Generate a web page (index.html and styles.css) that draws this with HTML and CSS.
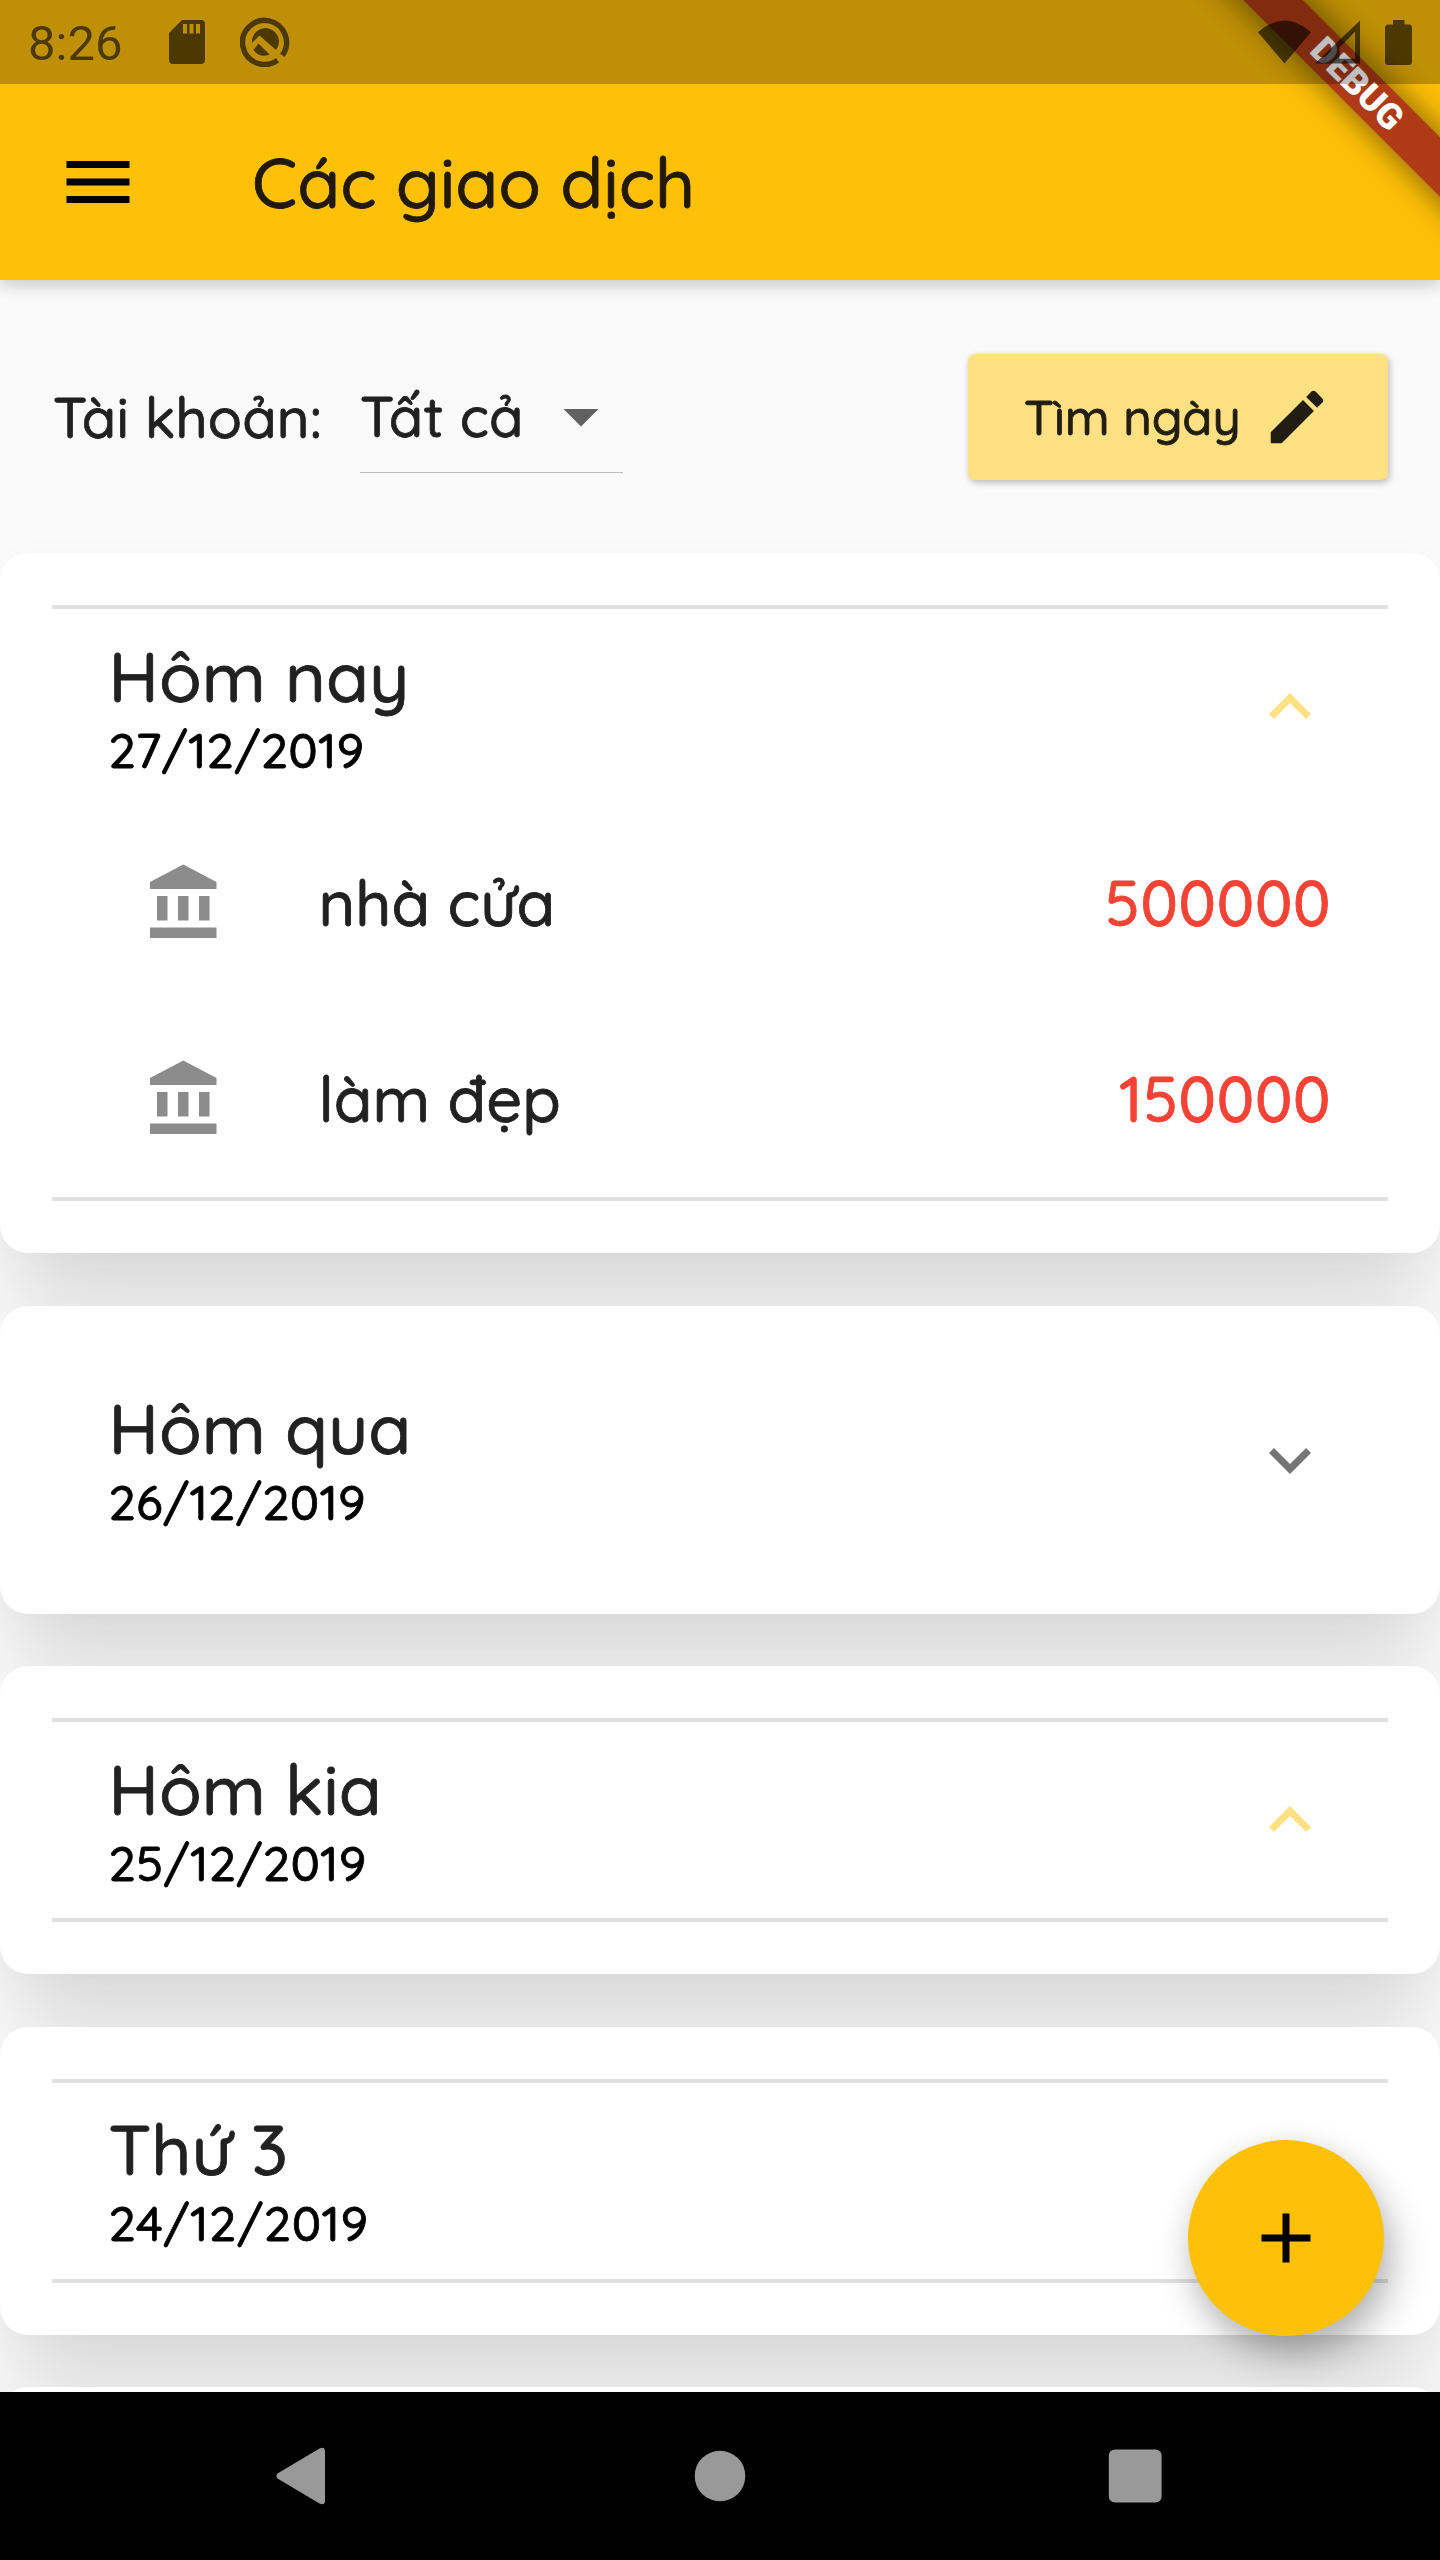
FILE: index.html
```html
<!DOCTYPE html>
<html lang="vi">
<head>
<meta charset="utf-8">
<title>Các giao dịch</title>
<link rel="stylesheet" href="styles.css">
</head>
<body>
<svg class="defs" width="0" height="0">
  <symbol id="bank" viewBox="0 0 24 24"><path d="M4 10v7h3v-7H4zm6 0v7h3v-7h-3zM2 22h19v-3H2v3zm14-12v7h3v-7h-3zm-4.500-9L2 6v2h19V6l-9.500-5z"/></symbol>
  <symbol id="less" viewBox="0 0 24 24"><path d="M12 8l-6 6 1.410 1.410L12 10.830l4.590 4.580L18 14z"/></symbol>
  <symbol id="more" viewBox="0 0 24 24"><path d="M16.590 8.590L12 13.170 7.410 8.590 6 10l6 6 6-6z"/></symbol>
</svg>
<div class="screen">
  <header class="appbar">
    <svg class="icon menu" viewBox="0 0 24 24"><path d="M3 18h18v-2H3v2zm0-5h18v-2H3v2zm0-7v2h18V6H3z"/></svg>
    <h1 class="appbar-title">Các giao dịch</h1>
  </header>

  <main class="content">
    <section class="filters">
      <span class="filter-label">Tài khoản:</span>
      <div class="select">
        <span class="select-value">Tất cả</span>
        <svg class="icon select-arrow" viewBox="0 0 24 24"><path d="M7 10l5 5 5-5z"/></svg>
      </div>
      <button class="date-button">
        <span class="date-button-text">Tìm ngày</span>
        <svg class="pencil" viewBox="0 0 24 24"><path d="M3 17.25V21h3.75L17.81 9.94l-3.75-3.75L3 17.25zM20.71 7.04c.39-.39.39-1.02 0-1.41l-2.34-2.34c-.39-.39-1.02-.39-1.41 0l-1.83 1.83 3.75 3.75 1.83-1.83z"/></svg>
      </button>
    </section>

    <section class="days">
      <article class="card">
        <div class="tile open">
          <div class="tile-head">
            <div class="tile-text"><h2 class="day">Hôm nay</h2><p class="date">27/12/2019</p></div>
            <svg class="icon chevron"><use href="#less"/></svg>
          </div>
          <div class="entry"><svg class="icon bank"><use href="#bank"/></svg><span class="entry-name">nhà cửa</span><span class="amount">500000</span></div>
          <div class="entry"><svg class="icon bank"><use href="#bank"/></svg><span class="entry-name">làm đẹp</span><span class="amount">150000</span></div>
        </div>
      </article>
      <article class="card">
        <div class="tile">
          <div class="tile-head">
            <div class="tile-text"><h2 class="day">Hôm qua</h2><p class="date">26/12/2019</p></div>
            <svg class="icon chevron"><use href="#more"/></svg>
          </div>
        </div>
      </article>
      <article class="card">
        <div class="tile open">
          <div class="tile-head">
            <div class="tile-text"><h2 class="day">Hôm kia</h2><p class="date">25/12/2019</p></div>
            <svg class="icon chevron"><use href="#less"/></svg>
          </div>
        </div>
      </article>
      <article class="card">
        <div class="tile open">
          <div class="tile-head">
            <div class="tile-text"><h2 class="day">Thứ 3</h2><p class="date date-loose">24/12/2019</p></div>
            <svg class="icon chevron"><use href="#less"/></svg>
          </div>
        </div>
      </article>
      <article class="card"></article>
    </section>
  </main>

  <nav class="navbar">
    <svg class="nav-icon" viewBox="0 0 84 84"><path d="M16.500 39.500 L58.500 14.500 Q64 12 64 17.500 V66.500 Q64 72 58.500 69.500 L16.500 44.500 Q14.500 42 16.500 39.500Z"/></svg>
    <svg class="nav-icon" viewBox="0 0 84 84"><circle cx="42" cy="42" r="25.300"/></svg>
    <svg class="nav-icon" viewBox="0 0 84 84"><rect x="13.800" y="15.500" width="52.800" height="53" rx="6"/></svg>
  </nav>

  <button class="fab"><svg class="icon" viewBox="0 0 24 24"><path d="M19 13h-6v6h-2v-6H5v-2h6V5h2v6h6v2z"/></svg></button>
  <div class="banner-clip"><div class="banner">DEBUG</div></div>

  <div class="statusbar">
    <span class="clock">8:26</span>
    <svg class="sd" viewBox="0 0 36 44"><path fill-rule="evenodd" d="M13 0H32Q36 0 36 4V40Q36 44 32 44H4Q0 44 0 40V13ZM14 4V13.500H18V4ZM20.500 4V13.500H24.500V4ZM27 4V13.500H31V4Z"/></svg>
    <svg class="qicon" viewBox="0 0 50 50"><path d="M37.500 43.200A22 22 0 1 1 42.300 38.400" fill="none" stroke="currentColor" stroke-width="5.500"/><path d="M12 26A13.500 13.500 0 1 1 36 33L19.500 18.500Z"/><path d="M13.500 33L18.500 26.500L29.500 37.500Q20 41.500 13.500 33Z"/></svg>
    <span class="spacer"></span>
    <svg class="wifi" viewBox="0 0 54 44"><path d="M0 12Q27-12 54 12L27 44Z"/></svg>
    <svg class="signal" viewBox="0 0 46 44"><path fill-rule="evenodd" d="M46 0V44H0ZM41 11.500L25 27.500V39H41Z"/></svg>
    <svg class="battery" viewBox="0 0 27 45"><path d="M8 0H19.500V4.500H24Q27 4.500 27 8V42Q27 45 24 45H3Q0 45 0 42V8Q0 4.500 3 4.500H8Z"/></svg>
  </div>
</div>
</body>
</html>
```
FILE: styles.css
```css
* { box-sizing: border-box; margin: 0; }
body { background: #fafafa; }
.defs { display: block; position: absolute; }
.screen {
  position: relative;
  width: 1440px;
  height: 2560px;
  overflow: hidden;
  display: flex;
  flex-direction: column;
  background: #fafafa;
  color: #212121;
  font-family: Quicksand, Inter, "Noto Sans", sans-serif;
  font-weight: 500;
  -webkit-text-stroke: .8px currentColor;
}
svg { display: block; flex: none; fill: currentColor; }
button { border: 0; font: inherit; color: inherit; }
.icon { width: 84px; height: 84px; }

.appbar {
  position: relative;
  z-index: 1;
  flex: none;
  height: 280px;
  padding: 84px 56px 0;
  display: flex;
  align-items: center;
  gap: 112px;
  background: #ffc107;
  color: #211901;
  box-shadow: 0 6px 14px rgba(0, 0, 0, .15), 0 2px 24px rgba(0, 0, 0, .06);
}
.menu { color: #000; }
.appbar-title { padding-bottom: 1px; font-size: 70px; line-height: 88px; font-weight: 500; }

.content { flex: 1; min-height: 0; overflow: hidden; }
.filters {
  height: 273px;
  padding: 0 52px;
  display: flex;
  align-items: center;
}
.filter-label, .select-value { font-size: 56px; line-height: 84px; white-space: nowrap; letter-spacing: .25px; }
.filter-label { width: 308px; padding-left: 1px; }
.select {
  width: 263px;
  height: 113px;
  display: flex;
  align-items: center;
  justify-content: space-between;
  border-bottom: 1px solid #bdbdbd;
}
.select-value { width: 0; }
.select-arrow { color: #616161; }
.date-button {
  margin-left: auto;
  width: 420px;
  height: 126px;
  padding: 0 56px;
  display: flex;
  align-items: center;
  justify-content: space-between;
  border-radius: 7px;
  background: #ffe082;
  color: #211d11;
  box-shadow: 2px 3px 7px rgba(0, 0, 0, .2), 0 1px 6px rgba(0, 0, 0, .08);
}
.date-button-text { font-size: 49px; line-height: 70px; }
.pencil { width: 70px; height: 70px; }

.days { display: flex; flex-direction: column; gap: 52.5px; }
.card {
  flex: none;
  min-height: 308px;
  padding: 52px;
  border-radius: 28px;
  background: #fff;
  box-shadow: 0 70px 84px -14px rgba(0, 0, 0, .13), 0 0 28px rgba(0, 0, 0, .02);
}
.tile { border: solid transparent; border-width: 4px 0; }
.tile.open { border-color: #e0e0e0; }
.tile-head {
  height: 196px;
  padding: 0 56.5px;
  display: flex;
  align-items: center;
  justify-content: space-between;
}
.tile-text { padding-bottom: 3px; }
.day { font-size: 70px; line-height: 88px; font-weight: 500; }
.date { font-size: 49px; line-height: 60px; color: #000; letter-spacing: .2px; }
.date-loose { letter-spacing: .5px; }
.chevron { color: #757575; }
.open .chevron { color: #ffe082; }
.entry {
  height: 196px;
  padding: 0 57px 0 91px;
  display: flex;
  align-items: center;
  font-size: 63px;
}
.entry-name, .amount { padding-bottom: 2px; }
.bank { color: #8c8c8c; margin-right: 91.5px; }
.amount { margin-left: auto; color: #f44336; letter-spacing: .3px; }

.navbar {
  position: relative;
  z-index: 2;
  flex: none;
  height: 168px;
  padding: 0 261px;
  display: flex;
  align-items: center;
  justify-content: space-between;
  background: #000;
  color: #999;
}
.nav-icon { width: 84px; height: 84px; }

.fab {
  position: absolute;
  right: 56px;
  bottom: 224px;
  width: 196px;
  height: 196px;
  display: grid;
  place-items: center;
  border-radius: 50%;
  background: #ffc107;
  color: #000;
  box-shadow: 8px 20px 38px rgba(0, 0, 0, .27), 0 4px 28px rgba(0, 0, 0, .07);
}

.banner-clip {
  position: absolute;
  z-index: 3;
  top: 0;
  right: 0;
  width: 320px;
  height: 320px;
  overflow: hidden;
}
.banner {
  position: absolute;
  left: 7px;
  top: 63px;
  width: 460px;
  height: 42px;
  transform: rotate(45deg);
  background: #ae3b15;
  box-shadow: 0 0 34px rgba(0, 0, 0, .55);
  color: #fff;
  font: 900 35.7px/42px Roboto, sans-serif;
  text-align: center;
  -webkit-text-stroke: 0;
}

.statusbar {
  position: absolute;
  z-index: 4;
  top: 0;
  left: 0;
  width: 100%;
  height: 84px;
  padding: 0 28px;
  display: flex;
  align-items: center;
  background: rgba(0, 0, 0, .25);
  color: rgba(0, 0, 0, .6);
  -webkit-text-stroke: 0;
}
.clock { width: 141px; padding-top: 3px; font: 400 49px/60px Roboto, sans-serif; }
.sd { width: 36px; height: 44px; }
.qicon { width: 50px; height: 50px; margin-left: 35px; }
.spacer { flex: 1; }
.wifi { width: 53px; height: 44px; margin-right: 4px; }
.signal { width: 45px; height: 44px; margin-right: 25px; }
.battery { width: 27px; height: 45px; }
```
